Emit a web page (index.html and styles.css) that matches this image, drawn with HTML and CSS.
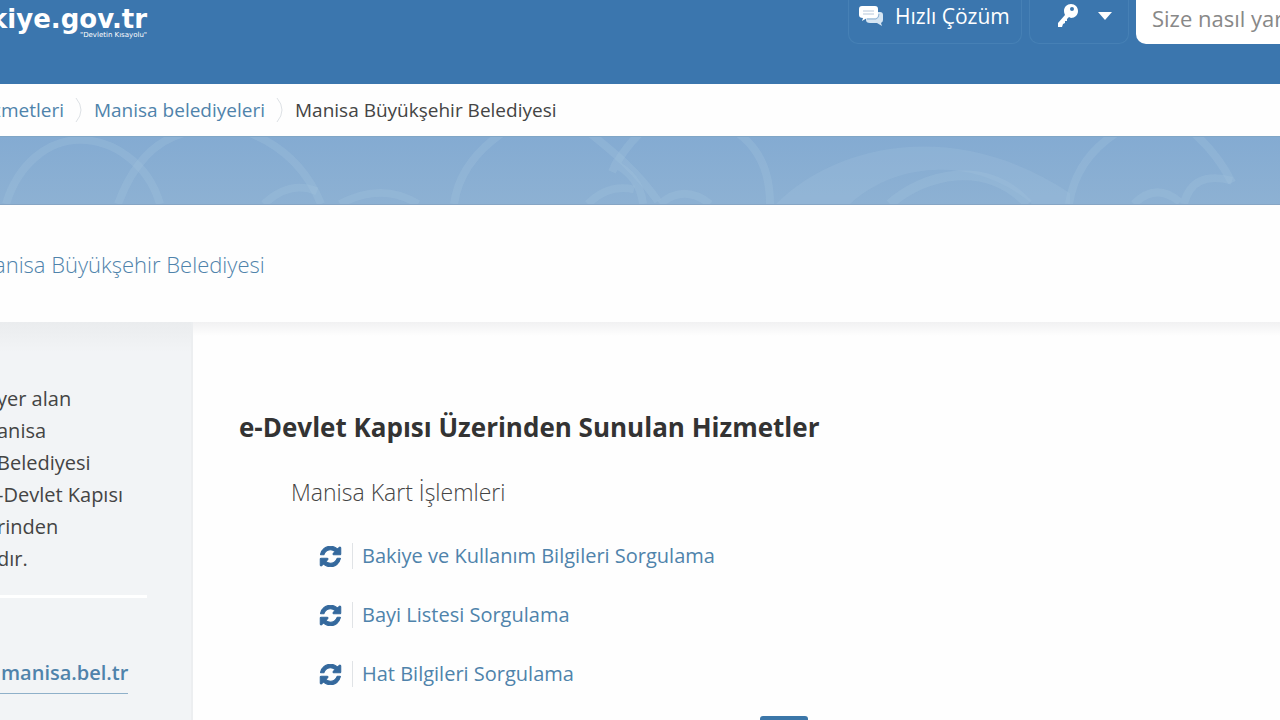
FILE: index.html
```html
<!DOCTYPE html>
<html lang="tr">
<head>
  <meta charset="UTF-8" />
  <meta name="viewport" content="width=device-width, initial-scale=1" />
  <title>Manisa Büyükşehir Belediyesi</title>
  <link rel="stylesheet" href="styles.css">
</head>
<body>
  <svg class="sprite" aria-hidden="true">
    <symbol id="refresh" viewBox="-40 -20 1616 1576">
      <path d="M1511 928q0 5-1 7-64 268-268 434.500T764 1536q-146 0-282.500-55T238 1324l-129 129q-19 19-45 19t-45-19-19-45V960q0-26 19-45t45-19h448q26 0 45 19t19 45-19 45l-137 137q71 66 161 102t187 36q134 0 250-65t186-179q11-17 53-117 8-23 30-23h192q13 0 22.500 9.500t9.500 22.500zm25-800v448q0 26-19 45t-45 19h-448q-26 0-45-19t-19-45 19-45l138-138Q969 256 768 256q-134 0-250 65T332 500q-11 17-53 117-8 23-30 23H50q-13 0-22.500-9.500T18 608v-7q65-268 270-434.500T768 0q146 0 284 55.500T1297 212l130-129q19-19 45-19t45 19 19 45z"/>
    </symbol>
  </svg>

  <header class="header">
    <a class="logo" href="#">
      <span class="logo-name">kiye.gov.tr</span>
      <span class="logo-slogan">"Devletin Kısayolu"</span>
    </a>
    <div class="tools">
      <button class="tool-btn quick" type="button">
        <svg class="icon-chat" viewBox="0 0 24 20" aria-hidden="true">
          <path d="M9 6H21Q24 6 24 9V14Q24 16 22 17L23 20L18 17H11Q7 17 7 14V6Z" fill="#d5e5f3"/>
          <path d="M3 0H16Q19 0 19 3V9Q19 12 16 12H8L3 15L4 12Q0 12 0 9V3Q0 0 3 0Z" fill="#fff"/>
          <path d="M8 13H17Q20 12 20 8" fill="none" stroke="#8fb2d3" stroke-width="1"/>
          <path d="M4 5H15M4 8H15" stroke="#b5c6da" stroke-width="1"/>
        </svg>
        Hızlı Çözüm
      </button>
      <button class="tool-btn login" type="button" aria-label="Giriş">
        <svg class="icon-key" viewBox="0 0 20 24" aria-hidden="true">
          <path fill-rule="evenodd" d="M13 0C17 0 20 3 20 7S17 14 13 14L11 13L9 15V17H7V19L5 20L4 23H0V19L7 11Q6 9 6 7C6 3 9 0 13 0ZM14 3A2 2 0 1 0 14 7A2 2 0 1 0 14 3Z"/>
        </svg>
        <svg class="icon-caret" viewBox="0 0 14 8" aria-hidden="true"><path d="M0 0H14L7 8Z"/></svg>
      </button>
      <input class="search" type="text" placeholder="Size nasıl yardım" aria-label="Arama" />
    </div>
  </header>

  <nav class="breadcrumb">
    <a href="#">zmetleri</a>
    <svg class="sep" viewBox="0 0 8 26" aria-hidden="true"><path d="M1 1Q6 7 6 13T1 25"/></svg>
    <a href="#">Manisa belediyeleri</a>
    <svg class="sep" viewBox="0 0 8 26" aria-hidden="true"><path d="M1 1Q6 7 6 13T1 25"/></svg>
    <span>Manisa Büyükşehir Belediyesi</span>
  </nav>

  <div class="banner">
    <svg viewBox="0 0 1280 69" preserveAspectRatio="none" aria-hidden="true">
      <g fill="none" stroke="#a3c4de" stroke-opacity="0.3" stroke-width="8">
        <path d="M6 69C18 28 48 3 80 3S148 26 160 69"/>
        <path d="M118 69C132 30 154 4 184 -4M250 -4C284 10 308 36 321 69"/>
        <path d="M264 69Q290 44 317 56M340 69Q382 46 418 69"/>
        <path d="M454 69C458 40 474 16 502 -4M590 -4C614 16 636 34 658 66"/>
        <path d="M640 -4Q622 14 612 36M612 26Q640 40 643 69M738 -4Q770 20 770 69"/>
        <path d="M588 69Q608 48 634 54M660 69Q684 48 710 69"/>
        <path d="M890 69C924 38 986 22 1028 69" stroke-width="10"/>
        <path d="M1069 69C1074 36 1092 12 1116 -4M1194 -4Q1218 18 1232 47"/>
        <path d="M1134 69Q1156 46 1180 67M1184 69Q1192 34 1232 45"/>
      </g>
      <path d="M776 69C840 4 960 -18 1070 58V69H1032C980 22 900 22 850 69Z" fill="#a3c4de" fill-opacity="0.25"/>
    </svg>
  </div>

  <div class="title-bar">
    <a href="#">anisa Büyükşehir Belediyesi</a>
  </div>

  <div class="page">
    <aside class="sidebar">
      <p>yer alan<br>anisa<br>Belediyesi<br>-Devlet Kapısı<br>rinden<br>dır.</p>
      <a class="site-link" href="#">manisa.bel.tr</a>
    </aside>

    <main class="content">
      <h1>e-Devlet Kapısı Üzerinden Sunulan Hizmetler</h1>
      <h2>Manisa Kart İşlemleri</h2>
      <ul class="services">
        <li><svg class="icon-refresh" aria-hidden="true"><use href="#refresh"/></svg><a href="#">Bakiye ve Kullanım Bilgileri Sorgulama</a></li>
        <li><svg class="icon-refresh" aria-hidden="true"><use href="#refresh"/></svg><a href="#">Bayi Listesi Sorgulama</a></li>
        <li><svg class="icon-refresh" aria-hidden="true"><use href="#refresh"/></svg><a href="#">Hat Bilgileri Sorgulama</a></li>
      </ul>
      <div class="tag"></div>
    </main>
  </div>
</body>
</html>
```

FILE: styles.css
```css
* {
  box-sizing: border-box;
}

body {
  margin: 0;
  height: 100vh;
  overflow: hidden;
  display: flex;
  flex-direction: column;
  font-family: "Open Sans", "Noto Sans", sans-serif;
  font-size: 20px;
  color: #444;
  background: #fefefe;
}

a {
  color: #4f83ab;
  text-decoration: none;
}

.sprite {
  display: none;
}

.header {
  display: flex;
  justify-content: space-between;
  flex-shrink: 0;
  height: 84px;
  background: #3b76ae;
}

.logo {
  display: flex;
  flex-direction: column;
  align-items: flex-end;
  margin-left: -10px;
  padding-top: 8px;
  color: #fff;
  font-family: "DejaVu Sans", sans-serif;
}

.logo-name {
  font-size: 26px;
  font-weight: bold;
  line-height: 22px;
}

.logo-slogan {
  font-size: 7px;
  line-height: 10px;
}

.tools {
  display: flex;
  gap: 7px;
  height: 44px;
  margin-right: -60px;
}

.tool-btn {
  display: flex;
  align-items: center;
  padding: 0 10px 12px;
  border: 1px solid #4680b5;
  border-top: none;
  border-radius: 0 0 10px 10px;
  background: none;
  color: #fff;
  font-family: inherit;
  font-size: 21px;
  white-space: nowrap;
}

.quick {
  width: 174px;
  gap: 12px;
}

.login {
  width: 100px;
  gap: 20px;
  padding-left: 28px;
}

.icon-chat {
  flex-shrink: 0;
  width: 24px;
  height: 20px;
}

.icon-key {
  width: 20px;
  height: 24px;
  fill: #fff;
}

.icon-caret {
  width: 14px;
  height: 8px;
  fill: #fff;
}

.search {
  width: 204px;
  padding: 0 16px 8px;
  border: none;
  border-radius: 0 0 0 10px;
  background: #fff;
  font-family: inherit;
  font-size: 22px;
}

.search::placeholder {
  color: #888;
}

.breadcrumb {
  display: flex;
  align-items: center;
  flex-shrink: 0;
  gap: 11px;
  height: 52px;
  margin-left: -8px;
  font-size: 19px;
}

.sep {
  width: 8px;
  height: 26px;
  fill: none;
  stroke: #dde1e5;
}

.banner {
  flex-shrink: 0;
  height: 69px;
  background: linear-gradient(#84abd2, #8db1d3);
  border-top: 1px solid #80a6c6;
  border-bottom: 1px solid #86a5c4;
}

.banner svg {
  display: block;
  width: 100%;
  height: 67px;
}

.title-bar {
  display: flex;
  align-items: center;
  flex-shrink: 0;
  height: 117px;
  margin-left: -6px;
  font-size: 22px;
  font-weight: 300;
}

.page {
  display: flex;
  flex: 1;
}

.sidebar {
  width: 193px;
  padding-top: 61px;
  background: linear-gradient(#eaecee, #f2f4f6 30px);
  border-right: 2px solid #eceef0;
}

.sidebar p {
  margin: 0 44px 0 -3px;
  padding-bottom: 20px;
  border-bottom: 3px solid #fff;
  line-height: 32px;
}

.site-link {
  display: inline-block;
  margin-top: 61px;
  padding: 0 0 7px 1px;
  border-bottom: 1px solid #8fb0c9;
  font-weight: 600;
}

.content {
  flex: 1;
  padding: 85px 46px 0;
  background: linear-gradient(#f1f1f2, #fefefe 14px);
}

h1 {
  margin: 0;
  font-size: 26px;
  font-weight: bold;
  line-height: 40px;
  color: #333;
}

h2 {
  margin: 27px 0 0 52px;
  font-size: 23px;
  font-weight: 300;
  line-height: 36px;
}

.services {
  display: flex;
  flex-direction: column;
  gap: 31px;
  margin: 32px 0 0 80px;
  padding: 0;
  list-style: none;
}

.services li {
  display: flex;
  align-items: center;
  gap: 10px;
  height: 28px;
}

.services a {
  padding-left: 9px;
  border-left: 1px solid #e0e3e6;
  line-height: 26px;
}

.icon-refresh {
  width: 23px;
  height: 21px;
  fill: #35699d;
  stroke: #35699d;
  stroke-width: 80;
}

.tag {
  width: 48px;
  height: 30px;
  margin: 28px 0 0 521px;
  border-radius: 3px;
  background: #3b76a8;
}
```
